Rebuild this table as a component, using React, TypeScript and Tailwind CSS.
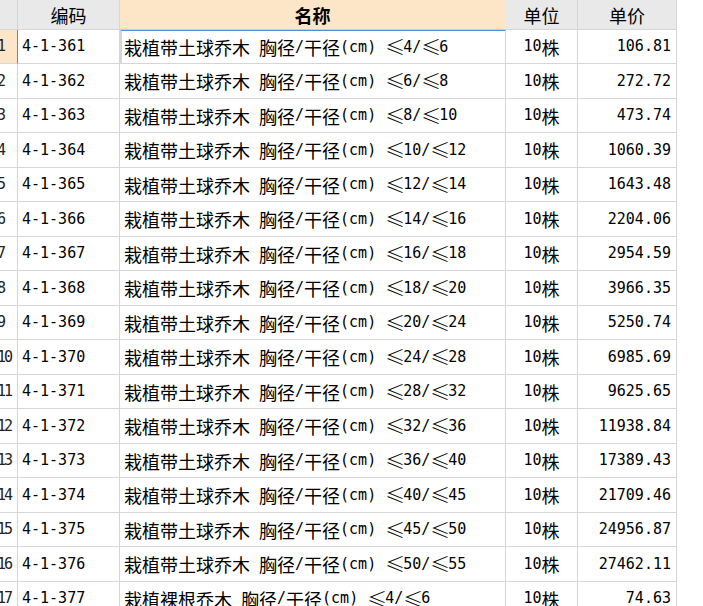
const rows = [
  { no: 1, code: "4-1-361", name: "栽植带土球乔木 胸径/干径(cm) ≤4/≤6", price: "106.81" },
  { no: 2, code: "4-1-362", name: "栽植带土球乔木 胸径/干径(cm) ≤6/≤8", price: "272.72" },
  { no: 3, code: "4-1-363", name: "栽植带土球乔木 胸径/干径(cm) ≤8/≤10", price: "473.74" },
  { no: 4, code: "4-1-364", name: "栽植带土球乔木 胸径/干径(cm) ≤10/≤12", price: "1060.39" },
  { no: 5, code: "4-1-365", name: "栽植带土球乔木 胸径/干径(cm) ≤12/≤14", price: "1643.48" },
  { no: 6, code: "4-1-366", name: "栽植带土球乔木 胸径/干径(cm) ≤14/≤16", price: "2204.06" },
  { no: 7, code: "4-1-367", name: "栽植带土球乔木 胸径/干径(cm) ≤16/≤18", price: "2954.59" },
  { no: 8, code: "4-1-368", name: "栽植带土球乔木 胸径/干径(cm) ≤18/≤20", price: "3966.35" },
  { no: 9, code: "4-1-369", name: "栽植带土球乔木 胸径/干径(cm) ≤20/≤24", price: "5250.74" },
  { no: 10, code: "4-1-370", name: "栽植带土球乔木 胸径/干径(cm) ≤24/≤28", price: "6985.69" },
  { no: 11, code: "4-1-371", name: "栽植带土球乔木 胸径/干径(cm) ≤28/≤32", price: "9625.65" },
  { no: 12, code: "4-1-372", name: "栽植带土球乔木 胸径/干径(cm) ≤32/≤36", price: "11938.84" },
  { no: 13, code: "4-1-373", name: "栽植带土球乔木 胸径/干径(cm) ≤36/≤40", price: "17389.43" },
  { no: 14, code: "4-1-374", name: "栽植带土球乔木 胸径/干径(cm) ≤40/≤45", price: "21709.46" },
  { no: 15, code: "4-1-375", name: "栽植带土球乔木 胸径/干径(cm) ≤45/≤50", price: "24956.87" },
  { no: 16, code: "4-1-376", name: "栽植带土球乔木 胸径/干径(cm) ≤50/≤55", price: "27462.11" },
  { no: 17, code: "4-1-377", name: "栽植裸根乔木 胸径/干径(cm) ≤4/≤6", price: "74.63" },
];

// SimSun-like mix: half-width latin in a mono face, full-width CJK at 18px
function Txt({ s }: { s: string }) {
  const parts = s.split(/([\u2264\u3000-\u9fff\uff00-\uffef]+)/).filter(Boolean);
  return (
    <>
      {parts.map((p, i) =>
        /[\u2264\u3000-\u9fff\uff00-\uffef]/.test(p) ? (
          <span key={i} className="font-['Noto_Sans_CJK_SC',sans-serif] text-[18px]">
            {Array.from(p).map((ch, j) =>
              ch === "≤" ? (
                <span
                  key={j}
                  className="inline-block w-[18px] text-center font-['Noto_Sans_CJK_SC',sans-serif] text-[20px] font-light"
                >
                  {ch}
                </span>
              ) : (
                ch
              )
            )}
          </span>
        ) : (
          <span key={i} className="font-['DejaVu_Sans_Mono',monospace] text-[15px] whitespace-pre">
            {p}
          </span>
        )
      )}
    </>
  );
}

const cell = "box-border flex items-center overflow-hidden whitespace-nowrap border-b border-r border-[#d6d6d6] leading-none text-black";

export default function App() {
  return (
    <div className="h-[606px] w-full overflow-hidden bg-white">
      {/* header */}
      <div className="flex h-[30px]">
        <div className={`${cell} w-[18px] bg-[#e9e9e9] border-[#cdcdcd]`} />
        <div className={`${cell} w-[102px] justify-center bg-[#e9e9e9] border-[#cdcdcd] text-[#222]`}>
          <Txt s="编码" />
        </div>
        <div className={`${cell} w-[386px] justify-center bg-[#fde5c8] border-b-[#cdcdcd] border-r-[#fde5c8] font-bold`}>
          <Txt s="名称" />
        </div>
        <div className={`${cell} w-[72px] justify-center bg-[#e9e9e9] border-[#cdcdcd] text-[#222]`}>
          <Txt s="单位" />
        </div>
        <div className={`${cell} w-[99px] justify-center bg-[#e9e9e9] border-[#cdcdcd] text-[#222]`}>
          <Txt s="单价" />
        </div>
      </div>

      {rows.map((r, i) => {
        const active = i === 0;
        return (
          <div key={r.no} className={`flex ${i % 2 === 0 ? "h-[34px]" : "h-[35px]"}`}>
            {/* row header, scrolled so only the tail of the number shows */}
            <div
              className={`${cell} w-[18px] ${active ? "bg-[#fde5c8] border-r-[#4a8fe0]" : "bg-white"}`}
            >
              <span className="-ml-[3px] shrink-0 font-['DejaVu_Sans_Mono',monospace] text-[15px] tracking-[-2px] text-[#222]">
                {r.no}
              </span>
            </div>
            <div className={`${cell} w-[102px] pl-1`}>
              <Txt s={r.code} />
            </div>
            <div
              className={`${cell} w-[386px] ${
                active ? "border-2 border-[#6f6f6f] border-t border-t-[#4a8fe0] pl-[2px]" : "pl-1"
              }`}
            >
              <Txt s={r.name} />
            </div>
            <div className={`${cell} w-[72px] justify-center`}>
              <Txt s="10株" />
            </div>
            <div className={`${cell} w-[99px] justify-end pr-[5px]`}>
              <Txt s={r.price} />
            </div>
          </div>
        );
      })}
    </div>
  );
}
